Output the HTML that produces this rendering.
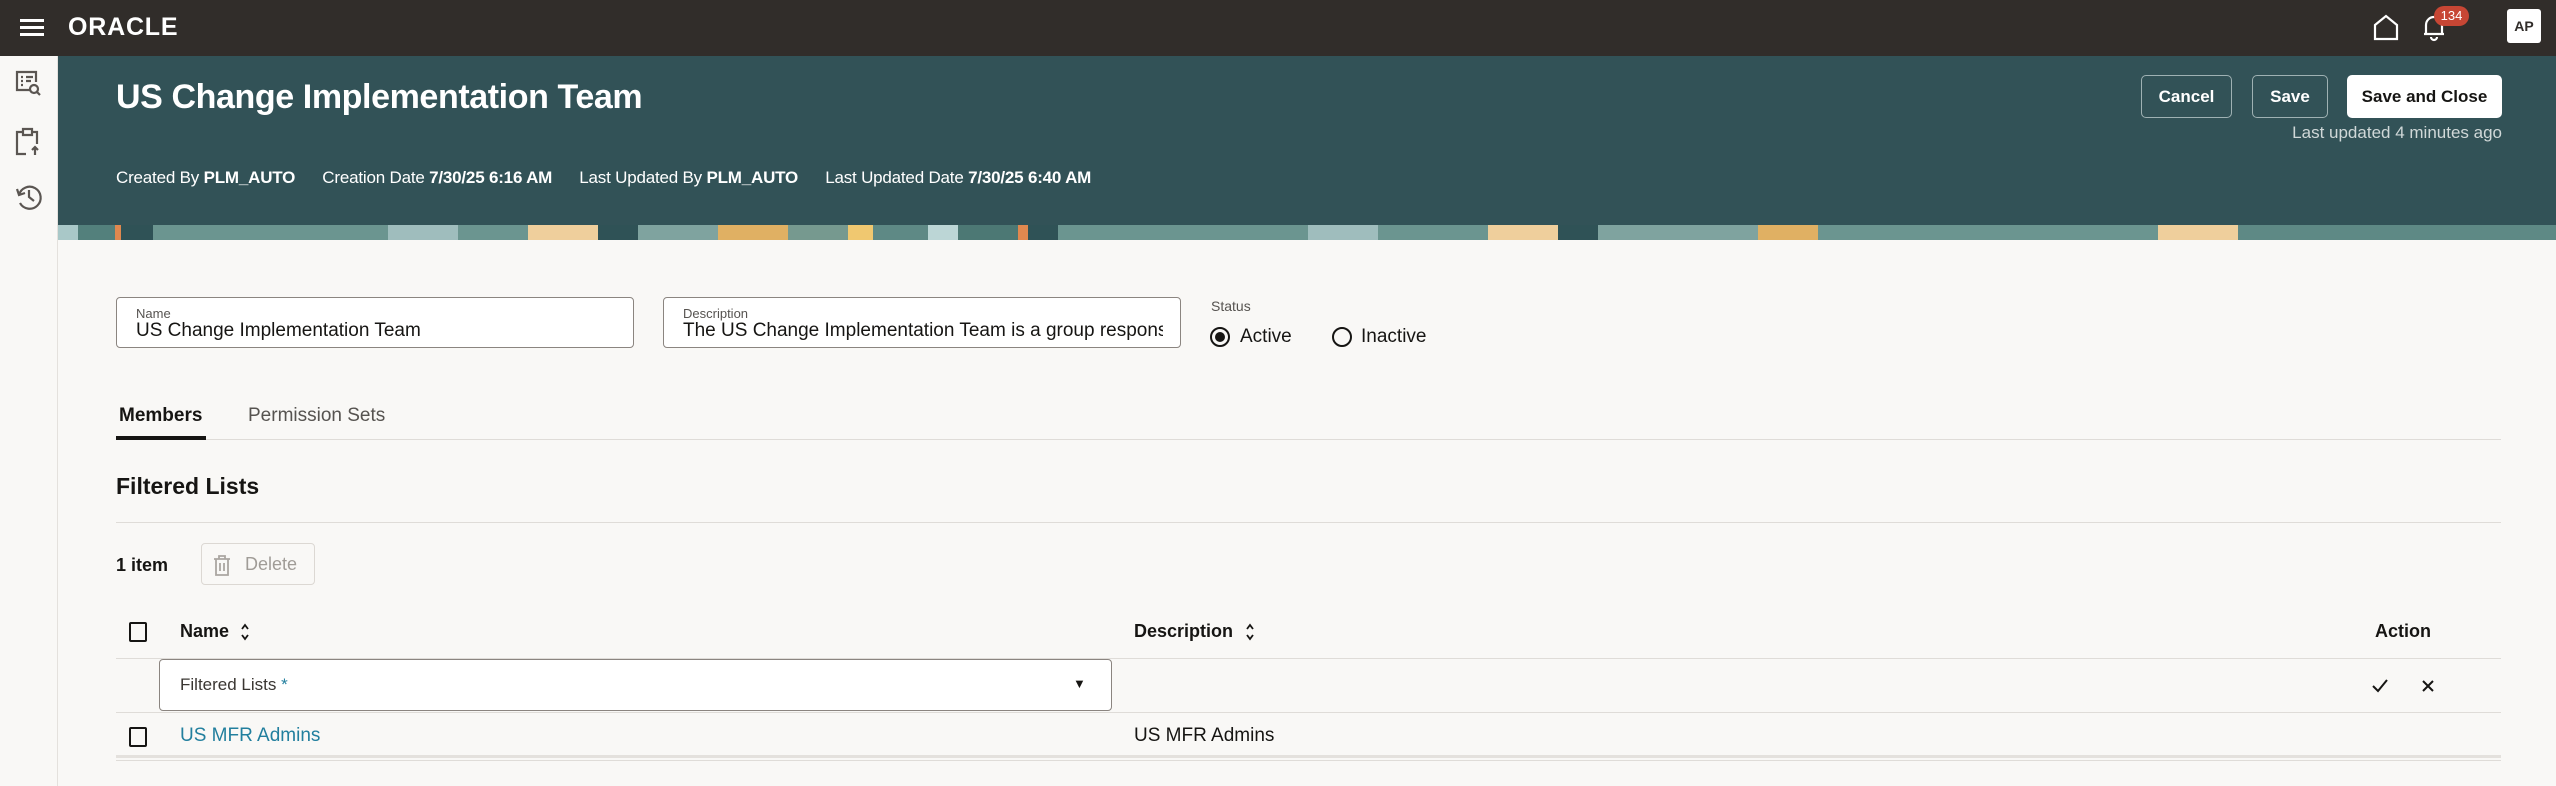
<!DOCTYPE html>
<html><head><meta charset="utf-8"><style>
*{margin:0;padding:0;box-sizing:border-box}
body{width:2556px;height:786px;overflow:hidden;background:#f9f8f6;font-family:"Liberation Sans",sans-serif;color:#161513;position:relative}
.a{position:absolute;white-space:nowrap}
.top{left:0;top:0;width:2556px;height:56px;background:#312d2a}
.side{left:0;top:56px;width:58px;height:730px;background:#f9f8f6;border-right:1px solid #e4e1dd}
.hdr{left:58px;top:56px;width:2498px;height:169px;background:#325257}
.band{left:58px;top:225px;width:2498px;height:15px;background:
linear-gradient(90deg,#a9c8c8 0,#a9c8c8 20px,#53807c 20px,#53807c 57px,#e0884f 57px,#e0884f 63px,#2f5256 63px,#2f5256 95px,#6b9590 95px,#6b9590 330px,#9fbdbd 330px,#9fbdbd 400px,#6b9590 400px,#6b9590 470px,#efcf9c 470px,#efcf9c 540px,#2f5256 540px,#2f5256 580px,#7fa39f 580px,#7fa39f 660px,#e0b063 660px,#e0b063 730px,#76998f 730px,#76998f 790px,#f0c870 790px,#f0c870 815px,#5e8985 815px,#5e8985 870px,#bcd6d6 870px,#bcd6d6 900px,#4c7874 900px,#4c7874 960px,#e0884f 960px,#e0884f 970px,#2f5256 970px,#2f5256 1000px,#6b9590 1000px,#6b9590 1250px,#9fbdbd 1250px,#9fbdbd 1320px,#6b9590 1320px,#6b9590 1430px,#efcf9c 1430px,#efcf9c 1500px,#2f5256 1500px,#2f5256 1540px,#7fa39f 1540px,#7fa39f 1700px,#e0b063 1700px,#e0b063 1760px,#6b9590 1760px,#6b9590 2100px,#efcf9c 2100px,#efcf9c 2180px,#5e8985 2180px,#5e8985 2498px)}
.w{color:#fff}
.btn{border:1px solid #9fb1b3;border-radius:5px;color:#fff;font-weight:bold;font-size:17px;display:flex;align-items:center;justify-content:center;height:43px;top:75px}
.fld{background:#fff;border:1px solid #8b8580;border-radius:4px;height:51px;top:297px}
.fld .l{position:absolute;left:19px;top:8px;font-size:13px;color:#565350}
.fld .v{position:absolute;left:19px;top:22px;font-size:19px;color:#161513;white-space:nowrap;overflow:hidden;width:480px}
.rad{width:20px;height:20px;border:2px solid #161513;border-radius:50%;top:327px}
.hl{height:1px;background:#dfdcd8;left:116px;width:2385px}
.cb{width:18px;height:20px;border:2px solid #161513;border-radius:2px;left:129px}
</style></head><body>
<div class="a top"></div>
<div class="a" style="left:20px;top:19px;width:24px;height:3px;background:#fff;box-shadow:0 7px 0 #fff,0 14px 0 #fff"></div>
<div class="a w" style="left:68px;top:13px;font-size:25px;letter-spacing:0.8px;font-weight:bold">ORACLE</div>
<svg class="a" style="left:2372px;top:13px" width="28" height="28" viewBox="0 0 28 28"><path d="M3 12 L14 3 L25 12 V26 H3 Z" fill="none" stroke="#fff" stroke-width="2.2"/></svg>
<svg class="a" style="left:2420px;top:12px" width="28" height="30" viewBox="0 0 28 30"><path d="M6 22 V13 a8 8 0 0 1 16 0 V22 H4 H24 M11 25 a3 3 0 0 0 6 0" fill="none" stroke="#fff" stroke-width="2.2"/></svg>
<div class="a" style="left:2434px;top:6px;width:35px;height:20px;border-radius:10px;background:#c74634;color:#fff;font-size:13px;text-align:center;line-height:20px">134</div>
<div class="a" style="left:2507px;top:9px;width:34px;height:34px;border-radius:3px;background:#fff;color:#312d2a;font-size:14px;font-weight:bold;text-align:center;line-height:34px">AP</div>

<div class="a side"></div>
<svg class="a" style="left:14px;top:70px" width="30" height="150" viewBox="0 0 30 150" fill="none" stroke="#5b5652" stroke-width="2.2">
<path d="M16 20 H3 V2 H22 V12"/><path d="M7 7 H9 M12 7 H19 M7 11 H9 M12 11 H17 M7 15 H9"/><circle cx="20" cy="19" r="4"/><path d="M23 22 L26 25"/>
<path d="M9 62 H3 V84 H12 M18 62 H23 V74 M9 59 H18 V65 H9 Z M21 85 V77 M18 80 L21 77 L24 80"/>
<path d="M5 125 A11 11 0 1 1 6 133 M3 119 L5 125 L11 123 M15 120 V127 L20 131"/>
</svg>

<div class="a hdr"></div>
<div class="a band"></div>
<div class="a w" style="left:116px;top:78px;font-size:34px;font-weight:bold;letter-spacing:-0.4px">US Change Implementation Team</div>
<div class="a w" style="left:116px;top:168px;font-size:17px;letter-spacing:-0.2px">Created By <b>PLM_AUTO</b>&nbsp;&nbsp;&nbsp;&nbsp;&nbsp;&nbsp;Creation Date <b>7/30/25 6:16 AM</b>&nbsp;&nbsp;&nbsp;&nbsp;&nbsp;&nbsp;Last Updated By <b>PLM_AUTO</b>&nbsp;&nbsp;&nbsp;&nbsp;&nbsp;&nbsp;Last Updated Date <b>7/30/25 6:40 AM</b></div>
<div class="a btn" style="left:2141px;width:91px">Cancel</div>
<div class="a btn" style="left:2252px;width:76px">Save</div>
<div class="a btn" style="left:2347px;width:155px;background:#fff;color:#161513;border-color:#fff">Save and Close</div>
<div class="a" style="right:54px;top:123px;font-size:17px;color:#d0d8d8">Last updated 4 minutes ago</div>

<div class="a fld" style="left:116px;width:518px"><div class="l">Name</div><div class="v">US Change Implementation Team</div></div>
<div class="a fld" style="left:663px;width:518px"><div class="l">Description</div><div class="v">The US Change Implementation Team is a group responsible</div></div>
<div class="a" style="left:1211px;top:298px;font-size:14px;color:#565350">Status</div>
<div class="a rad" style="left:1210px"><div style="width:10px;height:10px;margin:3px;border-radius:50%;background:#161513"></div></div>
<div class="a" style="left:1240px;top:326px;font-size:19px">Active</div>
<div class="a rad" style="left:1332px"></div>
<div class="a" style="left:1361px;top:326px;font-size:19px">Inactive</div>

<div class="a" style="left:119px;top:405px;font-size:19px;font-weight:bold">Members</div>
<div class="a" style="left:248px;top:405px;font-size:19px;color:#565350">Permission Sets</div>
<div class="a hl" style="top:439px"></div>
<div class="a" style="left:116px;top:436px;width:90px;height:4px;background:#161513"></div>
<div class="a" style="left:116px;top:473px;font-size:23px;font-weight:bold">Filtered Lists</div>
<div class="a hl" style="top:522px"></div>
<div class="a" style="left:116px;top:555px;font-size:18px;font-weight:bold">1 item</div>
<div class="a" style="left:201px;top:543px;width:114px;height:42px;border:1px solid #dcd8d3;border-radius:4px"></div>
<svg class="a" style="left:213px;top:554px" width="18" height="22" viewBox="0 0 18 22" fill="none" stroke="#aaa6a1" stroke-width="1.8"><path d="M1 5 H17 M6 5 V2 H12 V5 M3 5 V21 H15 V5 M7 9 V17 M11 9 V17"/></svg>
<div class="a" style="left:245px;top:554px;font-size:18px;color:#a09c97">Delete</div>

<div class="a cb" style="top:622px"></div>
<div class="a" style="left:180px;top:621px;font-size:18px;font-weight:bold">Name</div>
<svg class="a" style="left:240px;top:622px" width="10" height="20" viewBox="0 0 10 20" fill="none" stroke="#161513" stroke-width="1.8"><path d="M2 7 L5 3 L8 7 M2 13 L5 17 L8 13"/></svg>
<div class="a" style="left:1134px;top:621px;font-size:18px;font-weight:bold">Description</div>
<svg class="a" style="left:1245px;top:622px" width="10" height="20" viewBox="0 0 10 20" fill="none" stroke="#161513" stroke-width="1.8"><path d="M2 7 L5 3 L8 7 M2 13 L5 17 L8 13"/></svg>
<div class="a" style="left:2375px;top:621px;font-size:18px;font-weight:bold">Action</div>
<div class="a hl" style="top:658px"></div>
<div class="a" style="left:159px;top:659px;width:953px;height:52px;background:#fff;border:1px solid #8b8580;border-radius:4px"></div>
<div class="a" style="left:180px;top:675px;font-size:17px;color:#3a3632">Filtered Lists <span style="color:#227f9e">*</span></div>
<div class="a" style="left:1073px;top:676px;font-size:13px">▼</div>
<svg class="a" style="left:2371px;top:678px" width="18" height="16" viewBox="0 0 18 16" fill="none" stroke="#161513" stroke-width="2"><path d="M2 8 L7 13 L16 2"/></svg>
<svg class="a" style="left:2421px;top:679px" width="14" height="14" viewBox="0 0 14 14" fill="none" stroke="#161513" stroke-width="2"><path d="M2 2 L12 12 M12 2 L2 12"/></svg>
<div class="a hl" style="top:712px"></div>
<div class="a cb" style="top:727px"></div>
<div class="a" style="left:180px;top:725px;font-size:19px;color:#227f9e">US MFR Admins</div>
<div class="a" style="left:1134px;top:725px;font-size:19px">US MFR Admins</div>
<div class="a hl" style="top:755px;height:3px;background:#e4e1dd"></div>
<div class="a hl" style="top:760px"></div>
</body></html>
